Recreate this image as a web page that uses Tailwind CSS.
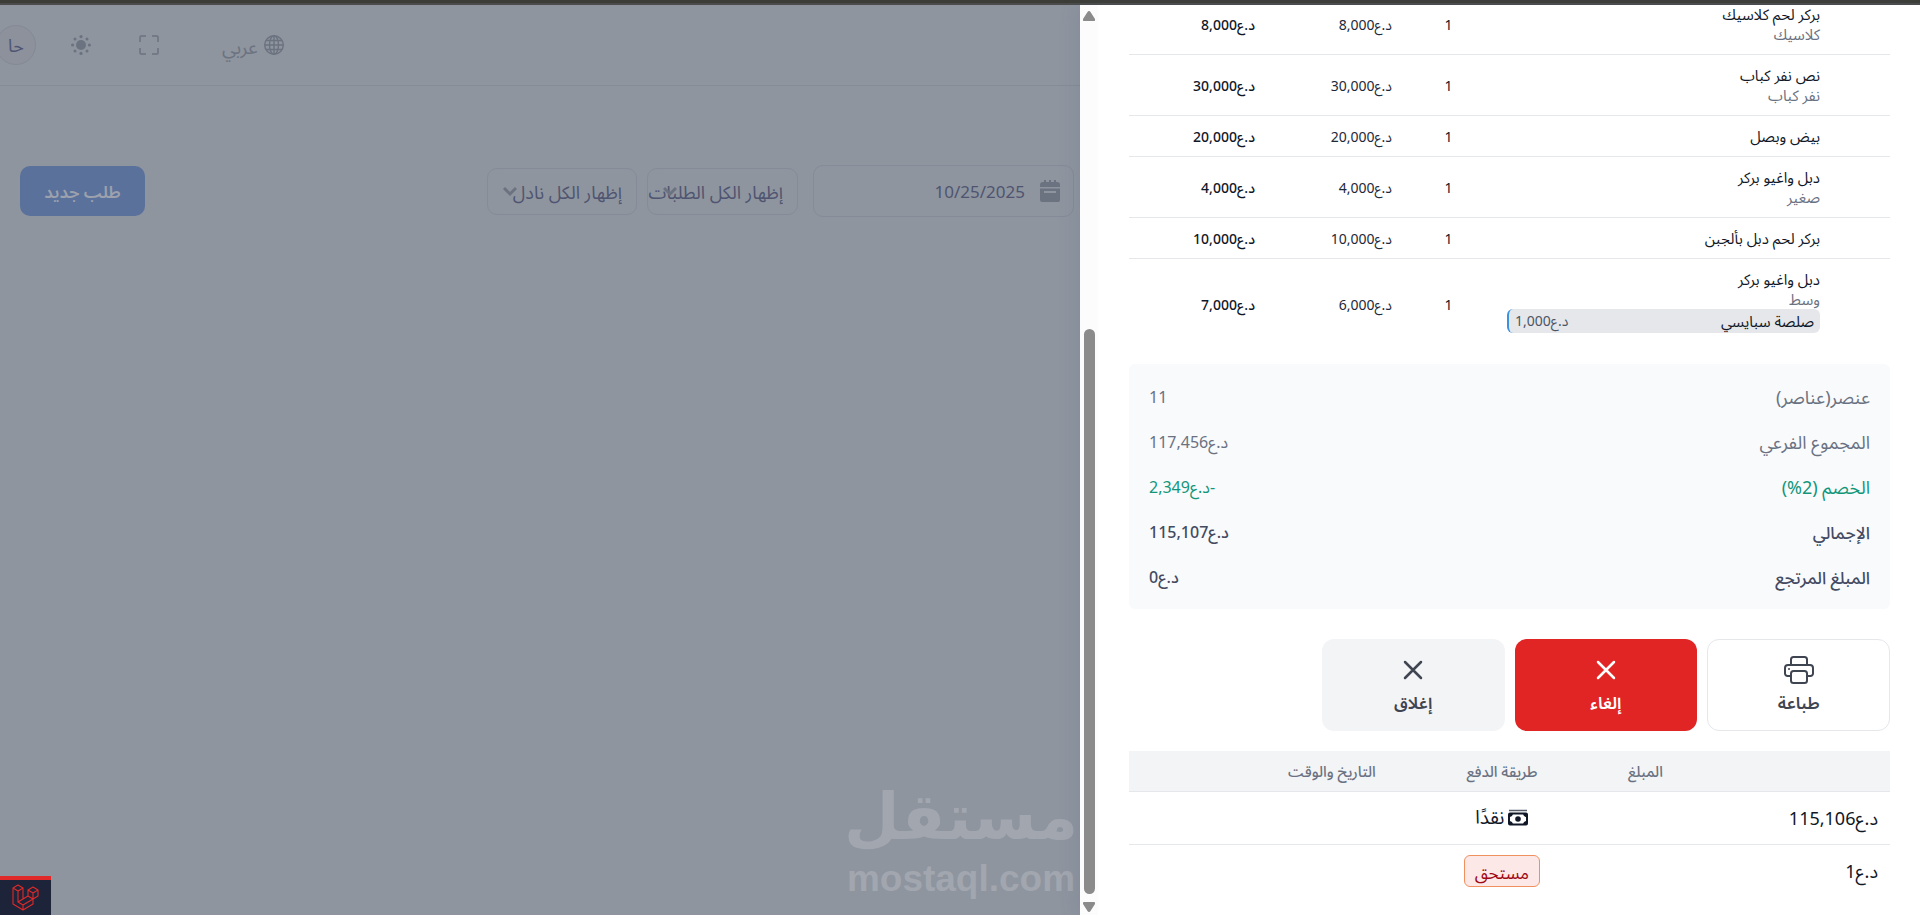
<!DOCTYPE html>
<html lang="ar" dir="rtl">
<head>
    <meta charset="UTF-8">
    <meta name="viewport" content="width=device-width, initial-scale=1.0">
    <title>الطلبات</title>
    <script src="https://cdn.jsdelivr.net/npm/@tailwindcss/browser@4"></script>
</head>
<body class="h-screen flex flex-col overflow-hidden bg-[#8e959f] font-['Noto_Sans','Noto_Sans_Arabic','DejaVu_Sans',sans-serif] text-gray-900">
    <div class="h-[5px] shrink-0 bg-[#3c3d37] border-b-2 border-[#4a4b4a]"></div>

    <div class="flex flex-1 min-h-0">
        <!-- Order drawer -->
        <aside class="relative z-10 flex w-[840px] shrink-0 overflow-hidden bg-white shadow-[0_0_20px_rgba(80,90,120,0.2)]">
            <div class="flex-1 min-w-0 pr-[30px] pl-[31px]">
                <table class="-mt-[11px] w-full table-fixed text-sm leading-5">
                    <colgroup>
                        <col class="w-[58px]">
                        <col>
                        <col class="w-[91px]">
                        <col class="w-[137px]">
                        <col class="w-[138px]">
                    </colgroup>
                    <tbody id="items"></tbody>
                </table>

                <!-- Totals -->
                <dl class="mt-[14px] flex flex-col gap-5 rounded-md bg-[#f9fafc] px-5 pt-[21px] pb-[19px] text-lg leading-[25px] text-gray-500">
                    <div class="flex justify-between"><dt>عنصر(عناصر)</dt><dd class="text-base leading-[25px]">11</dd></div>
                    <div class="flex justify-between"><dt>المجموع الفرعي</dt><dd class="text-base leading-[25px]">د.ع117,456</dd></div>
                    <div class="flex justify-between text-[#12967a]"><dt>الخصم (2%)</dt><dd class="text-base leading-[25px]">-د.ع2,349</dd></div>
                    <div class="flex justify-between font-medium text-[#434b61]"><dt class="text-[17px] leading-[25px]">الإجمالي</dt><dd class="text-base leading-[25px]">د.ع115,107</dd></div>
                    <div class="flex justify-between font-medium text-[#434b61]"><dt class="text-[17px] leading-[25px]">المبلغ المرتجع</dt><dd class="text-base leading-[25px]">د.ع0</dd></div>
                </dl>

                <!-- Actions -->
                <div class="mt-[30px] grid grid-cols-4 gap-[10px] text-[17px] leading-6 font-semibold">
                    <button class="flex h-[92px] flex-col items-center justify-center gap-1 rounded-xl border border-gray-200 bg-white text-[#404552]">
                        <svg class="size-8" viewBox="0 0 32 32" fill="none" stroke="currentColor" stroke-width="2" stroke-linejoin="round">
                            <path d="M8 10V4.500A2.500 2.500 0 0 1 10.500 2h11A2.500 2.500 0 0 1 24 4.500V10"/>
                            <path d="M8 21H4.500A2.500 2.500 0 0 1 2 18.500V13a3 3 0 0 1 3-3h22a3 3 0 0 1 3 3v5.500a2.500 2.500 0 0 1-2.500 2.500H24"/>
                            <rect x="8" y="16" width="16" height="12" rx="2.500"/>
                            <circle cx="6" cy="14" r="1" fill="currentColor" stroke="none"/>
                        </svg>
                        طباعة
                    </button>
                    <button class="flex h-[92px] flex-col items-center justify-center gap-1 rounded-xl bg-[#e12424] text-white">
                        <svg class="size-8" viewBox="0 0 32 32" fill="none" stroke="currentColor" stroke-width="2.500" stroke-linecap="round"><path d="M8 7l16 16M24 7L8 23"/></svg>
                        إلغاء
                    </button>
                    <button class="flex h-[92px] flex-col items-center justify-center gap-1 rounded-xl bg-gray-100 text-[#404552]">
                        <svg class="size-8" viewBox="0 0 32 32" fill="none" stroke="currentColor" stroke-width="2.500" stroke-linecap="round"><path d="M8 7l16 16M24 7L8 23"/></svg>
                        إغلاق
                    </button>
                </div>

                <!-- Payments -->
                <table class="mt-5 w-full table-fixed text-lg">
                    <thead class="border-b border-gray-200 bg-gray-100 text-[15px] leading-5 text-gray-500">
                        <tr>
                            <th class="w-[36%] px-3 py-[10px] text-left font-medium">المبلغ</th>
                            <th class="w-[30%] px-3 py-[10px] text-center font-medium">طريقة الدفع</th>
                            <th class="px-3 py-[10px] text-right font-medium">التاريخ والوقت</th>
                        </tr>
                    </thead>
                    <tbody>
                        <tr class="h-[53px] border-b border-gray-200">
                            <td class="px-3">د.ع115,106</td>
                            <td class="px-3">
                                <div class="flex items-center justify-center gap-1">
                                    <svg class="size-5" viewBox="0 0 20 20" fill="none" stroke="currentColor">
                                        <path d="M1 2.500h18" stroke-width="1.500" opacity=".7"/>
                                        <rect x="1" y="5.500" width="18" height="11" rx="1" stroke-width="2"/>
                                        <path d="M2 9q2.500-.5 3-3H2zM18 9q-2.500-.5-3-3h3zM2 13q2.500.5 3 3H2zM18 13q-2.500.5-3 3h3z" fill="currentColor" stroke="none"/>
                                        <circle cx="10" cy="11" r="2.800" fill="currentColor" stroke="none"/>
                                    </svg>
                                    <span class="text-[19px]">نقدًا</span>
                                </div>
                            </td>
                            <td></td>
                        </tr>
                        <tr class="h-[53px]">
                            <td class="px-3">د.ع1</td>
                            <td class="px-3 text-center">
                                <span class="inline-block rounded-md border border-[#f0905f] bg-[#fde8e8] px-[10px] pt-1 text-[17px] leading-[26px] text-red-800">مستحق</span>
                            </td>
                            <td></td>
                        </tr>
                    </tbody>
                </table>
            </div>

            <!-- Scroll track -->
            <div class="flex w-[18px] shrink-0 flex-col items-center bg-[#fcfcfc] pt-[6px] pb-[3px] text-[#8b8b8b]">
                <svg class="h-[10px] w-3" viewBox="0 0 12 10" fill="currentColor"><path d="M6 0q1 0 1.500 1L12 8q.5 2-1 2H1Q-.5 10 0 8l4.500-7Q5 0 6 0z"/></svg>
                <div class="mt-auto h-[565px] w-[11px] rounded-full bg-current"></div>
                <svg class="mt-2 h-[10px] w-3" viewBox="0 0 12 10" fill="currentColor"><path d="M6 10q1 0 1.500-1L12 2q.5-2-1-2H1Q-.5 0 0 2l4.500 7q.5 1 1.500 1z"/></svg>
            </div>
        </aside>

        <!-- Orders page behind the drawer -->
        <main class="relative flex-1 min-w-0 text-[#6c7380]">
            <header dir="ltr" class="flex h-[81px] items-center border-b border-[#858c98]">
                <button class="-ml-1 flex size-10 items-center justify-center rounded-full border border-[#838996] bg-[#8d919b] text-lg text-[#4f5675]">حا</button>
                <button class="ml-[35px]" aria-label="الوضع">
                    <svg class="size-5" viewBox="0 0 20 20" fill="currentColor">
                        <circle cx="10" cy="10" r="5"/>
                        <circle cx="10" cy="1.600" r="1.600"/><circle cx="10" cy="18.400" r="1.600"/><circle cx="1.600" cy="10" r="1.600"/><circle cx="18.400" cy="10" r="1.600"/>
                        <circle cx="4" cy="4" r="1.500"/><circle cx="16" cy="4" r="1.500"/><circle cx="4" cy="16" r="1.500"/><circle cx="16" cy="16" r="1.500"/>
                    </svg>
                </button>
                <button class="ml-12" aria-label="ملء الشاشة">
                    <svg class="size-5" viewBox="0 0 20 20" fill="none" stroke="currentColor" stroke-width="1.500"><path d="M1 7V2q0-1 1-1h5M13 1h5q1 0 1 1v5M19 13v5q0 1-1 1h-5M7 19H2q-1 0-1-1v-5"/></svg>
                </button>
                <button class="ml-[63px] flex items-center gap-[6px]">
                    <span class="pt-1 text-[19px] leading-6">عربي</span>
                    <svg class="size-5" viewBox="0 0 20 20" fill="none" stroke="currentColor" stroke-width="1.400"><circle cx="10" cy="10" r="9.300"/><ellipse cx="10" cy="10" rx="4.500" ry="9.300"/><path d="M10 .7v18.600M.7 10h18.600M2 5.500h16M2 14.500h16"/></svg>
                </button>
            </header>

            <div class="flex items-center pt-[79px] pr-[6px] pl-5 text-[#4f5470]">
                <label class="flex h-[52px] w-[261px] shrink-0 items-center gap-[15px] rounded-[10px] border border-[#858b98] px-[13px]">
                    <svg class="h-6 w-5 shrink-0" viewBox="0 0 20 24" fill="#6c7380" aria-label="التاريخ"><path d="M3 3h1V1h2v2h3V1h2v2h3V1h2v2h1q3 0 3 3v2H0V6q0-3 3-3zM0 9.500h20V21q0 2-2 2H2q-2 0-2-2zM4 12v2h12v-2z" fill-rule="evenodd"/></svg>
                    <input type="text" value="10/25/2025" class="w-full min-w-0 bg-transparent pt-[2px] text-[17px] outline-none">
                </label>
                <div class="relative mr-[15px] h-[47px] w-[151px] shrink-0">
                    <select aria-label="الطلبات" class="size-full appearance-none overflow-hidden rounded-[10px] border border-[#858b98] bg-transparent pt-[2px] pr-[14px] text-lg whitespace-nowrap">
                        <option>إظهار الكل الطلبات</option>
                    </select>
                    <svg class="pointer-events-none absolute top-[18px] left-4 h-3 w-[14px]" viewBox="0 0 14 12" fill="none" stroke="#6c7380" stroke-width="3"><path d="M1 2l6 6 6-6"/></svg>
                </div>
                <div class="relative mr-[10px] h-[47px] w-[150px] shrink-0">
                    <select aria-label="النادل" class="size-full appearance-none overflow-hidden rounded-[10px] border border-[#858b98] bg-transparent pt-[2px] pr-[14px] text-lg whitespace-nowrap">
                        <option>إظهار الكل نادل</option>
                    </select>
                    <svg class="pointer-events-none absolute top-[18px] left-4 h-3 w-[14px]" viewBox="0 0 14 12" fill="none" stroke="#6c7380" stroke-width="3"><path d="M1 2l6 6 6-6"/></svg>
                </div>
                <button class="mr-auto h-[50px] w-[125px] rounded-[10px] bg-[#5a719c] pt-[2px] text-[17px] font-semibold text-[#9ca1ad]">طلب جديد</button>
            </div>

            <!-- Watermark -->
            <div dir="ltr" class="absolute right-1 bottom-4 flex w-[230px] flex-col items-center font-bold text-[#a2a6af]">
                <span class="font-['DejaVu_Sans'] text-[64px] leading-[84px]">مستقل</span>
                <span class="font-['Liberation_Sans'] text-[37px] leading-10">mostaql.com</span>
            </div>

            <!-- Debug bar toggle -->
            <a href="#" aria-label="Debugbar" class="absolute bottom-0 left-0 flex h-[39px] w-[51px] items-center justify-center border-t-4 border-[#e02a2a] bg-[#1d2338]">
                <svg class="size-[27px]" viewBox="0 0 27 27" fill="none" stroke="#e02a2a" stroke-width="1.100" stroke-linejoin="round">
                    <path d="M1 4l5-3 5 3-5 3zM1 4v16l10 6 10-6v-5l5-3V6l-5-3-5 3 5 3 5-3M16 6v6l5 3M16 12l-10 6M6 7v11l5 3 10-6M11 4v11M11 21v5M21 9v6"/>
                </svg>
            </a>
        </main>
    </div>

    <script>
        const items = [
            { name: 'بركر لحم كلاسيك', size: 'كلاسيك', price: '8,000', total: '8,000' },
            { name: 'نص نفر كباب', size: 'نفر كباب', price: '30,000', total: '30,000' },
            { name: 'بيض وبصل', price: '20,000', total: '20,000' },
            { name: 'دبل واغيو بركر', size: 'صغير', price: '4,000', total: '4,000' },
            { name: 'بركر لحم دبل بألجبن', price: '10,000', total: '10,000' },
            { name: 'دبل واغيو بركر', size: 'وسط', price: '6,000', total: '7,000', extra: { name: 'صلصة سبايسي', price: '1,000' } },
        ];

        document.getElementById('items').innerHTML = items.map(item => `
            <tr class="group border-b border-gray-200 last:border-transparent">
                <td></td>
                <td class="px-3 py-[10px] text-[15px] leading-5 group-last:pb-4">
                    <div>${item.name}</div>
                    ${item.size ? `<div class="text-gray-500">${item.size}</div>` : ''}
                    ${item.extra ? `
                        <div class="flex h-6 items-center justify-between rounded-md border-l-2 border-[#3b93dd] bg-gray-200 px-[6px]">
                            <span>${item.extra.name}</span>
                            <span class="text-sm text-gray-600">د.ع${item.extra.price}</span>
                        </div>` : ''}
                </td>
                <td class="pt-[2px] pr-[2px] text-center">1</td>
                <td class="px-3 pt-[2px] text-gray-800">د.ع${item.price}</td>
                <td class="px-3 pt-[2px] font-medium">د.ع${item.total}</td>
            </tr>
        `).join('');
    </script>
</body>
</html>
